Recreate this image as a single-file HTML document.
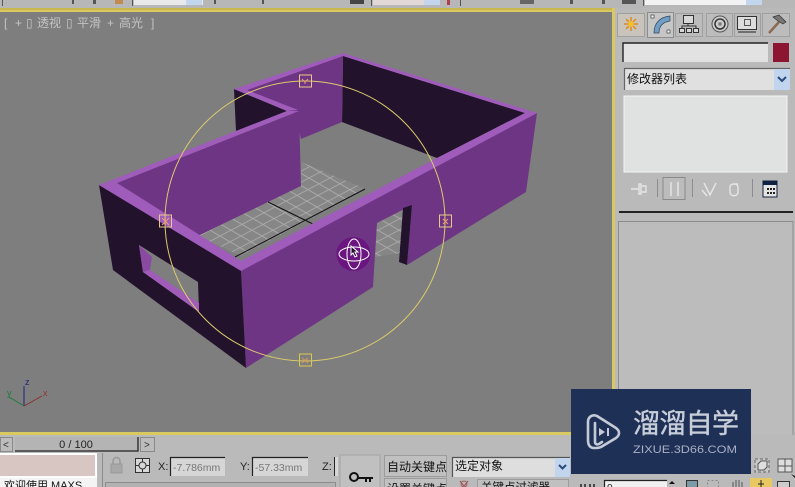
<!DOCTYPE html>
<html><head><meta charset="utf-8"><style>
html,body{margin:0;padding:0;width:795px;height:487px;overflow:hidden;background:#b9b9b9}
svg{display:block}
text{font-family:"Liberation Sans","Noto Sans CJK SC",sans-serif}
</style></head><body>
<svg width="795" height="487" viewBox="0 0 795 487" xmlns="http://www.w3.org/2000/svg">
<defs>
<pattern id="g" patternUnits="userSpaceOnUse" width="1" height="1" patternTransform="matrix(11 -5.8 10 5.8 198 236)">
<rect width="1" height="1" fill="#868686"/><rect width="1" height=".09" fill="#aaaaaa"/><rect width=".09" height="1" fill="#aaaaaa"/>
</pattern>
</defs>
<rect width="795" height="487" fill="#b9b9b9"/>
<!-- top strip -->
<rect x="0" y="0" width="795" height="8" fill="#b7b7b7"/>
<rect x="134" y="0" width="69" height="5" fill="#e9e9e9"/><rect x="186" y="0" width="16" height="5" fill="#c4d6ee"/>
<rect x="373" y="0" width="67" height="5" fill="#e2d8d8"/><rect x="424" y="0" width="16" height="5" fill="#c4d6ee"/>
<rect x="645" y="0" width="117" height="5" fill="#f2f2f2"/><rect x="746" y="0" width="16" height="5" fill="#c4d6ee"/>
<g fill="#555"><rect x="2" y="0" width="1" height="6"/><rect x="72" y="0" width="2" height="4"/><rect x="93" y="0" width="3" height="4"/><rect x="132" y="0" width="1" height="6"/><rect x="214" y="0" width="2" height="4"/><rect x="262" y="0" width="2" height="4"/><rect x="350" y="0" width="14" height="4" fill="#444"/><rect x="371" y="0" width="1" height="6"/><rect x="460" y="0" width="1" height="6"/><rect x="520" y="0" width="14" height="4" fill="#666"/><rect x="570" y="0" width="3" height="4"/><rect x="602" y="0" width="3" height="4"/><rect x="622" y="0" width="14" height="4"/><rect x="643" y="0" width="1" height="6"/></g>
<rect x="115" y="0" width="8" height="4" fill="#c08a50"/><rect x="447" y="0" width="3" height="5" fill="#b04050"/>
<!-- viewport -->
<rect x="0" y="8" width="615" height="427" fill="#d9c960"/>
<rect x="0" y="8" width="612" height="2" fill="#c9b850"/>
<rect x="0" y="12" width="612" height="420" fill="#7e7e7e"/>
<g font-size="12" fill="#c4c4c4">
<text x="4" y="27">[</text><text x="15" y="27">+</text><text x="26" y="27">▯</text><text x="37" y="27">透视</text><text x="66" y="27">▯</text><text x="77" y="27">平滑</text><text x="107" y="27">+</text><text x="119" y="27">高光</text><text x="151" y="27">]</text>
</g>
<!-- model -->
<polygon points="343,56 525,113 437,158 342,122" fill="#22122c"/>
<polygon points="247,90 343,56 342,122 301,139 295,115" fill="#6f3585"/>
<polygon points="234,89 287,111 236,131" fill="#22122c"/>
<polygon points="117,183 299,111 301,186 198,236 180,240 117,195" fill="#6f3585"/>
<polygon points="198,236 301,186 301,162 366,189 241,256" fill="url(#g)"/>
<line x1="235" y1="257" x2="365" y2="189" stroke="#111" stroke-width="1"/>
<line x1="268" y1="202" x2="315" y2="225" stroke="#111" stroke-width="1"/>
<polygon points="377,223 404,208 400,253 375,257" fill="url(#g)"/>
<polygon points="246,368 241,270 537,113 526,192 407,265 412,205 377,223 373,287" fill="#6f3585"/>
<polygon points="403,208 412,205 407,265 399,262" fill="#22122c"/>
<polygon points="99,185 241,270 246,368 113,270" fill="#22122c"/>
<polygon points="139,245 198,282 199,312 143,272" fill="#7e7e7e"/>
<polygon points="139,245 152,257 150,270 143,272" fill="#8a4aa2"/>
<polygon points="143,272 150,270 199,303 199,312" fill="#a05cb8"/>
<!-- rims -->
<g fill="#a05cbb">
<polygon points="234,89 343,53 537,113 525,113 343,56 247,90 298,110 287,111"/>
<polygon points="99,185 236,131 287,111 299,111 117,183"/>
<polygon points="99,185 117,183 241,261 437,158 525,113 537,113 241,271"/>
</g>
<!-- gizmo -->
<circle cx="305" cy="221" r="140" fill="none" stroke="#dccb6c" stroke-width="1"/>
<g fill="none" stroke="#e0c070" stroke-width="1">
<rect x="299.500" y="75" width="12" height="12" stroke="#e8c888"/><path d="M302 79l3 3 3-3M305 82v2" stroke="#e8a070"/>
<rect x="159.500" y="215" width="12" height="12" stroke="#e8c888"/><path d="M162 218l7 7m0-7l-7 7" stroke="#e8a070"/>
<rect x="439.500" y="215" width="12" height="12" stroke="#e8c888"/><path d="M443 219l5 5m0-5l-5 5" stroke="#e8a070"/>
<rect x="299.500" y="354" width="12" height="12" stroke="#d8c850"/><path d="M302 358l6 5m0-5l-6 5" stroke="#d8a050"/>
</g>
<circle cx="353.500" cy="254" r="17" fill="#6a1580"/>
<g fill="none" stroke="#fff" stroke-width="1">
<ellipse cx="354" cy="254" rx="15" ry="7"/><ellipse cx="354" cy="254" rx="7" ry="15"/>
</g>
<path d="M351 246l0 9 2-2 2 4 2-1-2-4 3 0z" fill="#20102a" stroke="#fff" stroke-width="1"/>
<!-- axis -->
<g fill="none" stroke-width="1">
<line x1="24" y1="406" x2="24" y2="386" stroke="#22227a"/>
<line x1="24" y1="406" x2="9" y2="397" stroke="#1f7a3c"/>
<line x1="24" y1="406" x2="42" y2="396" stroke="#8a3030"/>
</g>
<text x="25" y="385" font-size="9" fill="#22227a">z</text>
<text x="7" y="396" font-size="9" fill="#1f7a3c">y</text>
<text x="43" y="396" font-size="9" fill="#903434">x</text>
<!-- right panel -->
<rect x="615" y="10" width="180" height="440" fill="#bababa"/>
<g fill="#bcbcbc" stroke="#a0a0a0">
<rect x="617.500" y="13.500" width="27" height="23" fill="#c8c4bc"/>
<rect x="647.500" y="12.500" width="26" height="25" fill="#c6c6c6" stroke="#8c8c8c"/>
<rect x="675.500" y="13.500" width="27" height="23"/>
<rect x="706.500" y="13.500" width="26" height="23"/>
<rect x="734.500" y="13.500" width="26" height="23"/>
<rect x="762.500" y="13.500" width="27" height="23"/>
</g>
<g stroke="#e08a20" stroke-width="1.500"><path d="M631 17v14M624 24h14M626 19l10 10M636 19l-10 10"/></g>
<circle cx="631" cy="24" r="3" fill="#f5c030"/>
<path d="M654 33c0-10 6-16 16-17v5c-7 1-11 5-11 12z" fill="#6f9fc6" stroke="#345" stroke-width=".7"/>
<rect x="651" y="15" width="3" height="3" fill="#fff" stroke="#222" stroke-width=".6"/><rect x="667" y="30" width="3" height="3" fill="#fff" stroke="#222" stroke-width=".6"/>
<g fill="#d8d8d8" stroke="#333"><rect x="683.500" y="15.500" width="10" height="8"/><rect x="679.500" y="28.500" width="5" height="4"/><rect x="686.500" y="28.500" width="5" height="4"/><rect x="693.500" y="28.500" width="5" height="4"/></g>
<path d="M688 24v2M682 28v-2h14v2" fill="none" stroke="#333"/>
<circle cx="720" cy="24" r="8" fill="#d0d0d0" stroke="#555"/><circle cx="720" cy="24" r="5" fill="none" stroke="#333" stroke-width="1.500"/><circle cx="720" cy="24" r="2" fill="#888"/>
<rect x="737.500" y="16.500" width="19" height="13" fill="#ddd" stroke="#333"/><rect x="744.500" y="19.500" width="6" height="6" fill="none" stroke="#555"/><path d="M738 32h18" stroke="#222"/>
<path d="M769 33l10-11" stroke="#8a6a50" stroke-width="2.500"/><path d="M773 17l6-2 7 7-3 2-5-3z" fill="#777" stroke="#333" stroke-width=".7"/>
<rect x="623" y="43" width="145" height="19" fill="#e2e2e2"/><path d="M623 62V43h145" fill="none" stroke="#222" stroke-width="1.400"/>
<rect x="773" y="43" width="16" height="19" fill="#8c1532"/>
<rect x="624" y="68" width="166" height="22" fill="#e0e0e0"/><path d="M624.500 90V68.500H790" fill="none" stroke="#666" stroke-width="1.200"/>
<rect x="774" y="69" width="16" height="21" fill="#c2d5ee"/>
<path d="M778 77l4 4 4-4" fill="none" stroke="#2a4a7c" stroke-width="2"/>
<text x="627" y="83" font-size="12" fill="#111">修改器列表</text>
<rect x="624" y="96" width="163" height="76" fill="#e0e1e1" stroke="#f4f4f4"/>
<g fill="none" stroke="#e6e6e6" stroke-width="1.400">
<path d="M631 189h8M639 184h2v10h-2zM641 186h5v6h-5z"/>
<path d="M671 182v14M678 182v14"/>
<path d="M704 183l6 12 6-12M702 190l5 6"/><path d="M730 192c0 5 8 5 8 0v-5c0-4-8-4-8 0zM733 184h5"/>
</g>
<g fill="#8d8d8d"><rect x="657" y="179" width="1" height="18"/><rect x="692" y="179" width="1" height="18"/><rect x="752" y="179" width="1" height="18"/></g>
<rect x="663" y="177.500" width="22" height="22" fill="#bcbcbc" stroke="#8a8a8a"/>
<path d="M671 182v14M678 182v14" stroke="#e6e6e6" stroke-width="1.400" fill="none"/>
<rect x="763" y="181" width="14" height="16" fill="#e4e4e4" stroke="#102040"/><rect x="763" y="181" width="14" height="4" fill="#102040"/>
<path d="M767 189h8M767 193h8" stroke="#222" stroke-width="2" stroke-dasharray="2 1"/>
<rect x="619" y="211" width="174" height="2" fill="#222"/>
<rect x="618.500" y="221.500" width="174.500" height="224" fill="#bcbcbc" stroke="#8c8c8c"/>
<!-- timeline + status -->
<rect x="0" y="435" width="795" height="52" fill="#bababa"/>
<rect x="0" y="432" width="615" height="3" fill="#d9c960"/>
<rect x="612" y="10" width="3" height="425" fill="#d9c960"/>
<rect x="0.500" y="437.500" width="12" height="14" fill="#bcbcbc" stroke="#8a8a8a"/>
<text x="3" y="448" font-size="10" fill="#333">&lt;</text>
<rect x="15" y="437" width="123" height="14" fill="#b4b4b4"/><path d="M15 451h123v-14" fill="none" stroke="#222" stroke-width="1.300"/>
<text x="76" y="448" font-size="11" fill="#222" text-anchor="middle">0 / 100</text>
<rect x="140.500" y="437.500" width="14" height="14" fill="#bcbcbc" stroke="#8a8a8a"/>
<text x="144" y="448" font-size="10" fill="#333">&gt;</text>
<rect x="0" y="453" width="97" height="25" fill="#fff"/>
<rect x="0" y="455" width="95" height="21" fill="#d8c6c2"/>
<rect x="0" y="478" width="97" height="9" fill="#f4f4f4"/>
<text x="4" y="489" font-size="11" fill="#111">欢迎使用 MAXS</text>
<rect x="102" y="453" width="1" height="34" fill="#8c8c8c"/>
<rect x="111" y="464" width="11" height="9" fill="#a8a8a8" stroke="#999"/><path d="M113 464v-3a3.500 3.500 0 0 1 7 0v3" fill="none" stroke="#999" stroke-width="1.500"/>
<rect x="135.500" y="458.500" width="14" height="14" fill="#d8d8d8" stroke="#333"/><circle cx="142.500" cy="465.500" r="3.500" fill="none" stroke="#333"/><path d="M142.500 459v3M142.500 469v3M136 465.500h3M146 465.500h3" stroke="#333"/>
<text x="158" y="470" font-size="11" fill="#222">X:</text>
<rect x="170" y="457" width="55" height="19" fill="#d6d6d6"/><path d="M170.500 476V457.500H225" fill="none" stroke="#222" stroke-width="1.200"/>
<text x="173" y="471" font-size="10.500" fill="#777">-7.786mm</text>
<text x="240" y="470" font-size="11" fill="#222">Y:</text>
<rect x="252" y="457" width="56" height="19" fill="#d6d6d6"/><path d="M252.500 476V457.500H308" fill="none" stroke="#222" stroke-width="1.200"/>
<text x="255" y="471" font-size="10.500" fill="#777">-57.33mm</text>
<text x="322" y="470" font-size="11" fill="#222">Z:</text>
<rect x="334" y="457" width="4" height="19" fill="#d6d6d6"/><path d="M334.500 476V457" stroke="#222" fill="none"/>
<rect x="105.500" y="482.500" width="230" height="6" fill="#b2b2b2" stroke="#8c8c8c"/>
<rect x="340" y="455" width="40" height="34" fill="#c0c0c0" stroke="#a4a4a4"/>
<circle cx="354" cy="477" r="4" fill="none" stroke="#111" stroke-width="2"/><path d="M358 477h15v2h-2v3h-2v-3h-2v3h-2v-3h-7z" fill="#111"/>
<rect x="384.500" y="455.500" width="62" height="21" fill="#c0c0c0" stroke="#9c9c9c"/>
<text x="387" y="471" font-size="12" fill="#111">自动关键点</text>
<rect x="384.500" y="478.500" width="62" height="14" fill="#c0c0c0" stroke="#9c9c9c"/>
<text x="387" y="493" font-size="12" fill="#111">设置关键点</text>
<rect x="452" y="457" width="118" height="20" fill="#dedede"/><path d="M452.500 477V457.500H570" fill="none" stroke="#555" stroke-width="1.200"/>
<rect x="555" y="458" width="15" height="19" fill="#c2d5ee"/><path d="M559 465l3.500 3.500 3.500-3.500" fill="none" stroke="#2a4a7c" stroke-width="2"/>
<text x="455" y="470" font-size="12" fill="#111">选定对象</text>
<path d="M460 481l4 5 4-5" fill="none" stroke="#a04040"/><circle cx="464" cy="484" r="3" fill="none" stroke="#a06060"/>
<rect x="477.500" y="479.500" width="91" height="12" fill="#c0c0c0" stroke="#9c9c9c"/>
<text x="481" y="491" font-size="11.500" fill="#111">关键点过滤器</text>
<!-- watermark -->
<rect x="571" y="389" width="180" height="85" fill="#1f3057"/>
<g fill="none" stroke="#c4cad6" stroke-width="2.600" stroke-linejoin="round" stroke-linecap="round">
<path d="M588 440V422c0-5 4-8 9-6l19 12c4 3 4 7 0 10l-15 9c-2 1-3 1-5 1h-2c-4 0-6-3-6-8"/>
<path d="M595 423v19c0 2 2 3 4 2l3-2"/>
</g>
<polygon points="599,428 605,432 599,436" fill="#c4cad6"/><rect x="607" y="428" width="2" height="8" fill="#c4cad6"/>
<text x="633" y="433" font-size="27" font-weight="400" fill="#c8ced9" stroke="#c8ced9" stroke-width=".4" textLength="106" style='font-family:"Noto Sans CJK SC",sans-serif'>溜溜自学</text>
<text x="633" y="453" font-size="11" fill="#a8b0c4" textLength="104" lengthAdjust="spacingAndGlyphs">ZIXUE.3D66.COM</text>
<!-- bottom right -->
<rect x="755" y="459" width="14" height="13" fill="#c8c8c8" stroke="#666" stroke-dasharray="3 2"/><path d="M758 464l3-3h6v6l-3 3h-6z" fill="#dedede" stroke="#555"/>
<path d="M778 459h14v13h-14z" fill="#dedede" stroke="#555"/><path d="M785 459v13M778 466h14" stroke="#555"/>
<path d="M791 474l4 2v2z" fill="#111"/>
<path d="M581 484v3M585 484v3M590 484v3M594 484v3" stroke="#222" stroke-width="1.500"/>
<rect x="604" y="480" width="63" height="9" fill="#f0f0f0"/><path d="M604.500 489V480.500H667" fill="none" stroke="#222" stroke-width="1.200"/>
<text x="607" y="491" font-size="10" fill="#222">0</text>
<path d="M669 484l3-3 3 3z" fill="#111"/>
<rect x="686.500" y="480.500" width="11" height="9" fill="#7a9aa8" stroke="#333"/>
<rect x="707.500" y="480.500" width="11" height="9" fill="none" stroke="#888" stroke-dasharray="2 2"/>
<path d="M733 487v-5M736 487v-7M739 487v-7M742 487v-5" stroke="#555"/>
<rect x="750" y="478" width="22" height="10" fill="#e8c860"/><path d="M761 480v7M758 484h6" stroke="#222"/>
<rect x="777.500" y="481.500" width="12" height="8" fill="#ccc" stroke="#333"/>
</svg>
</body></html>
